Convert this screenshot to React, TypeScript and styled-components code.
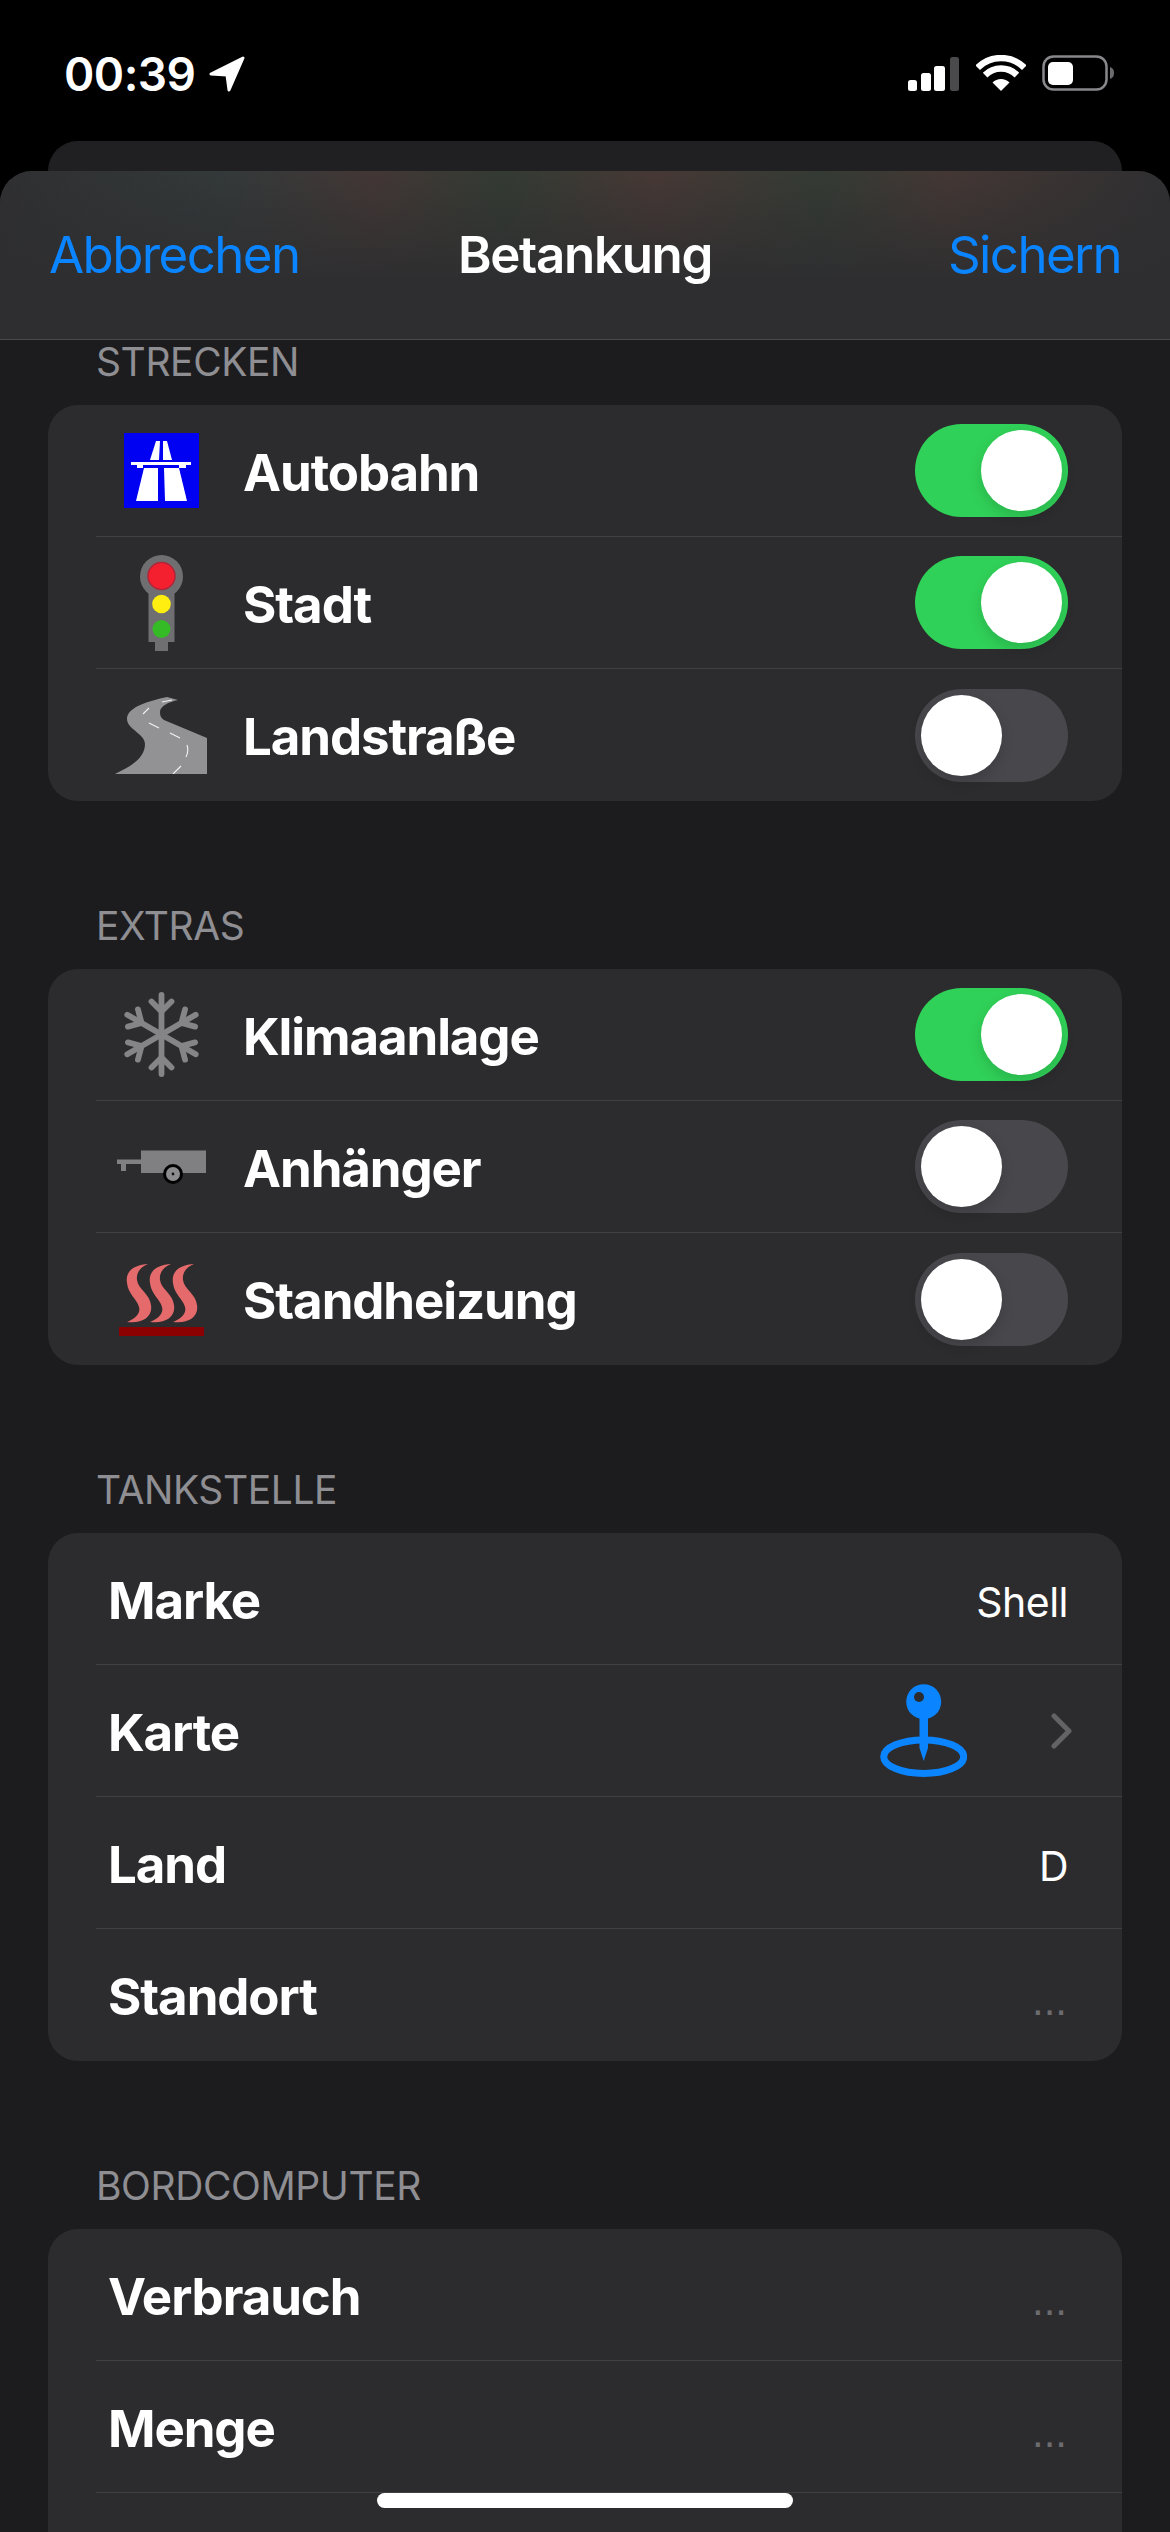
import React from "react";
import styled, { createGlobalStyle } from "styled-components";

const GlobalStyle = createGlobalStyle`
  html, body {
    margin: 0;
    padding: 0;
    background: #000;
  }
  * {
    box-sizing: border-box;
  }
`;

const Page = styled.div`
  position: relative;
  width: 1170px;
  height: 2532px;
  overflow: hidden;
  background: #000;
  font-family: Inter, "Liberation Sans", sans-serif;
  color: #fff;
`;

const StatusBar = styled.div`
  height: 141px;
  display: flex;
  justify-content: space-between;
  align-items: flex-start;
  padding: 55px 55px 0 64px;
`;

const StatusLeft = styled.div`
  display: flex;
  align-items: center;
  gap: 13px;
  height: 38px;
`;

const Clock = styled.span`
  font-size: 46px;
  font-weight: 600;
  line-height: 38px;
  letter-spacing: -0.5px;
`;

const StatusRight = styled.div`
  display: flex;
  align-items: flex-start;
  gap: 16px;
`;

const PeekCard = styled.div`
  height: 30px;
  margin: 0 48px;
  background: #202022;
  border-radius: 30px 30px 0 0;
`;

const Sheet = styled.div`
  height: 2361px;
  background: #1c1c1e;
  border-radius: 32px 32px 0 0;
  overflow: hidden;
`;

const NavBar = styled.div`
  height: 169px;
  display: grid;
  grid-template-columns: 1fr auto 1fr;
  align-items: center;
  padding: 0 49px;
  border-bottom: 1px solid #48484a;
  background:
    linear-gradient(to bottom, rgba(46, 46, 48, 0) 0%, #2e2e30 66%),
    linear-gradient(
      to right,
      #2f2f31 0%,
      #33393a 19%,
      #433735 32%,
      #333b33 43%,
      #473835 56%,
      #343b34 70%,
      #443734 81%,
      #2f2f31 100%
    );
`;

const NavAction = styled.span<{ $end?: boolean }>`
  font-size: 51px;
  line-height: 60px;
  letter-spacing: -1.6px;
  color: #0a84ff;
  text-align: ${(p) => (p.$end ? "right" : "left")};
`;

const NavTitle = styled.span`
  font-size: 51px;
  line-height: 60px;
  font-weight: 600;
  letter-spacing: -1.3px;
`;

const Section = styled.section`
  margin-bottom: 103px;
`;

const SectionLabel = styled.div`
  height: 65px;
  padding: 1px 0 0 96px;
  font-size: 39px;
  line-height: 42px;
  letter-spacing: -0.4px;
  color: #8e8e93;
`;

const Group = styled.div`
  margin: 0 48px;
  background: #2c2c2e;
  border-radius: 30px;
  overflow: hidden;
`;

const Row = styled.div`
  height: 132px;
  margin-left: 48px;
  display: flex;
  align-items: center;
  padding-right: 54px;
  border-bottom: 1px solid #404042;

  &:last-child {
    border-bottom: 0;
  }
`;

const IconSlot = styled.div`
  width: 92px;
  margin: 0 36px 0 19px;
  display: flex;
  align-items: center;
  justify-content: center;
  flex: none;
`;

const RowLabel = styled.span<{ $plain?: boolean }>`
  flex: 1;
  padding: 4px 0 0 ${(p) => (p.$plain ? "12px" : "0")};
  font-size: 51px;
  line-height: 60px;
  font-weight: 700;
  letter-spacing: -1.1px;
`;

const RowValue = styled.span`
  padding-top: 6px;
  font-size: 41px;
  line-height: 50px;
  letter-spacing: -0.5px;
`;

const Placeholder = styled.span`
  padding-top: 12px;
  margin-right: 1px;
  font-family: "Liberation Sans", sans-serif;
  font-size: 42px;
  line-height: 50px;
  color: #6c6c6f;
`;

const MapLink = styled.div`
  display: flex;
  align-items: center;
  gap: 84px;
  margin-right: -4px;
`;

const Track = styled.div<{ $on: boolean }>`
  width: 153px;
  height: 93px;
  flex: none;
  padding: 6px;
  display: flex;
  justify-content: ${(p) => (p.$on ? "flex-end" : "flex-start")};
  border-radius: 47px;
  background: ${(p) => (p.$on ? "#30d158" : "#47474c")};
`;

const Thumb = styled.div`
  width: 81px;
  height: 81px;
  border-radius: 50%;
  background: #fff;
  box-shadow: 0 6px 14px rgba(0, 0, 0, 0.14);
`;

const HomeBar = styled.div`
  position: absolute;
  left: 377px;
  bottom: 24px;
  width: 416px;
  height: 15px;
  border-radius: 8px;
  background: #fff;
`;

const LocationArrow = () => (
  <svg width="36" height="36" viewBox="0 0 36 36">
    <path
      d="M34 2 L2 18 L18 19 L20 34 Z"
      fill="#fff"
      stroke="#fff"
      strokeWidth="3"
      strokeLinejoin="round"
    />
  </svg>
);

const SignalIcon = () => (
  <svg width="52" height="34" viewBox="0 0 52 34" style={{ marginTop: 2 }}>
    <rect x="0" y="23" width="9" height="11" rx="2.5" fill="#fff" />
    <rect x="13" y="16" width="10" height="18" rx="2.5" fill="#fff" />
    <rect x="26" y="9" width="11" height="25" rx="2.5" fill="#fff" />
    <rect x="42" y="0" width="9" height="34" rx="2.5" fill="#4a4a4c" />
  </svg>
);

const WifiIcon = () => (
  <svg width="50" height="36" viewBox="0 0 50 36">
    <g fill="none" stroke="#fff" strokeWidth="6.5">
      <path d="M1.7 12.7 A33 33 0 0 1 48.3 12.7" />
      <path d="M9.1 20.1 A22.5 22.5 0 0 1 40.9 20.1" />
    </g>
    <path d="M25 36 L16.5 27.5 A12 12 0 0 1 33.5 27.5 Z" fill="#fff" />
  </svg>
);

const BatteryIcon = () => (
  <svg width="73" height="36" viewBox="0 0 73 36">
    <rect x="1.5" y="1.5" width="63" height="33" rx="10" fill="none" stroke="#88888c" strokeWidth="2.5" />
    <rect x="6" y="7" width="25" height="23" rx="5" fill="#fff" />
    <path d="M68 12 C71 13 72 15 72 18 C72 21 71 23 68 24 Z" fill="#6c6c70" />
  </svg>
);

const AutobahnIcon = () => (
  <svg width="75" height="75" viewBox="0 0 75 75">
    <rect width="75" height="75" fill="#0000f2" />
    <g fill="#fff">
      <polygon points="32,8 36,8 35,27 26,27" />
      <polygon points="39,8 43,8 48,27 39,27" />
      <rect x="7" y="29" width="60" height="3" />
      <rect x="13" y="32" width="6" height="3" />
      <rect x="55" y="32" width="7" height="3" />
      <polygon points="20,35 34,35 34,68 12,68" />
      <polygon points="40,35 55,35 63,68 41,68" />
    </g>
  </svg>
);

const TrafficLightIcon = () => (
  <svg width="43" height="96" viewBox="0 0 43 96">
    <g fill="#6f6f72">
      <circle cx="21.5" cy="21.5" r="21.5" />
      <rect x="8.5" y="30" width="26" height="57" />
      <rect x="15" y="87" width="13" height="9" />
    </g>
    <circle cx="21.5" cy="21" r="13.5" fill="#f4202f" stroke="#b02538" strokeWidth="1.5" />
    <circle cx="21.5" cy="49" r="9.3" fill="#ffee10" />
    <circle cx="21.5" cy="74" r="9" fill="#35bb25" />
  </svg>
);

const CountryRoadIcon = () => (
  <svg width="92" height="77" viewBox="0 0 92 77">
    <path
      d="M0 77 C14 70 30 62 30 47 C30 37 12 32 12 22 C12 10 34 4 52 0 L63 3 C54 5 45 9 45 15 C45 19 46 21 49 23 L92 41 L92 77 Z"
      fill="#929294"
    />
    <g fill="none" stroke="#f2f2f2" strokeWidth="1.1">
      <path d="M47 5 L57 3" />
      <path d="M28 17 L34 11" />
      <path d="M34 26 L44 31" />
      <path d="M55 36 L65 41" />
      <path d="M72 48 Q74 54 71 60" />
      <path d="M58 77 L66 69" />
    </g>
  </svg>
);

const SnowflakeIcon = () => (
  <svg width="75" height="85" viewBox="-37.5 -42.5 75 85">
    <g fill="none" stroke="#858587" strokeWidth="5.8" strokeLinecap="round" strokeLinejoin="round">
      {[0, 60, 120, 180, 240, 300].map((angle) => (
        <g key={angle} transform={`rotate(${angle})`}>
          <path d="M0 0 L0 -39.5" />
          <path d="M-10 -33 L0 -23 L10 -33" />
        </g>
      ))}
    </g>
  </svg>
);

const TrailerIcon = () => (
  <svg width="89" height="34" viewBox="0 0 89 34">
    <g fill="#808082">
      <rect x="24" y="0.5" width="65" height="22.5" />
      <rect x="0" y="9.5" width="24" height="4.5" />
      <rect x="4" y="14" width="5" height="7" />
    </g>
    <circle cx="56" cy="24" r="8.5" fill="#8c8c8e" stroke="#000" strokeWidth="3" />
    <circle cx="56" cy="24" r="1.4" fill="#111" />
  </svg>
);

const HeaterIcon = () => (
  <svg width="85" height="73" viewBox="0 0 85 73">
    {[0, 23, 46].map((dx) => (
      <path
        key={dx}
        transform={`translate(${dx} 0)`}
        d="M29 1 C15 2 6 8 8 20 C9 31 18 36 20 44 C22 51 15 56 8 59 C23 61 34 54 32 42 C31 31 19 26 18 17 C17 9 22 4 29 1 Z"
        fill="#e56a6b"
      />
    ))}
    <rect x="0" y="64" width="85" height="9" rx="1" fill="#8b0000" />
  </svg>
);

const PinIcon = () => (
  <svg width="87" height="93" viewBox="0 0 87 93">
    <ellipse cx="43.7" cy="72.7" rx="40" ry="16.8" fill="none" stroke="#0a84ff" strokeWidth="7" />
    <path d="M39.5 30 H48 V64 L43.7 77 L39.5 64 Z" fill="#0a84ff" />
    <circle cx="43.7" cy="17.7" r="17.5" fill="#0a84ff" />
    <circle cx="39" cy="13" r="5" fill="#2c2c2e" />
  </svg>
);

const Chevron = () => (
  <svg width="21" height="36" viewBox="0 0 21 36">
    <path
      d="M3 3 L18 18 L3 33"
      fill="none"
      stroke="#636366"
      strokeWidth="5"
      strokeLinecap="round"
      strokeLinejoin="round"
    />
  </svg>
);

const strecken = [
  { label: "Autobahn", icon: <AutobahnIcon />, on: true },
  { label: "Stadt", icon: <TrafficLightIcon />, on: true },
  { label: "Landstraße", icon: <CountryRoadIcon />, on: false },
];

const extras = [
  { label: "Klimaanlage", icon: <SnowflakeIcon />, on: true },
  { label: "Anhänger", icon: <TrailerIcon />, on: false },
  { label: "Standheizung", icon: <HeaterIcon />, on: false },
];

const ToggleRows = ({ rows }: { rows: typeof strecken }) => (
  <Group>
    {rows.map((row) => (
      <Row key={row.label}>
        <IconSlot>{row.icon}</IconSlot>
        <RowLabel>{row.label}</RowLabel>
        <Track $on={row.on}>
          <Thumb />
        </Track>
      </Row>
    ))}
  </Group>
);

export default function App() {
  return (
    <Page>
      <GlobalStyle />
      <StatusBar>
        <StatusLeft>
          <Clock>00:39</Clock>
          <LocationArrow />
        </StatusLeft>
        <StatusRight>
          <SignalIcon />
          <WifiIcon />
          <BatteryIcon />
        </StatusRight>
      </StatusBar>
      <PeekCard />
      <Sheet>
        <NavBar>
          <NavAction>Abbrechen</NavAction>
          <NavTitle>Betankung</NavTitle>
          <NavAction $end>Sichern</NavAction>
        </NavBar>

        <Section>
          <SectionLabel>STRECKEN</SectionLabel>
          <ToggleRows rows={strecken} />
        </Section>

        <Section>
          <SectionLabel>EXTRAS</SectionLabel>
          <ToggleRows rows={extras} />
        </Section>

        <Section>
          <SectionLabel>TANKSTELLE</SectionLabel>
          <Group>
            <Row>
              <RowLabel $plain>Marke</RowLabel>
              <RowValue>Shell</RowValue>
            </Row>
            <Row>
              <RowLabel $plain>Karte</RowLabel>
              <MapLink>
                <PinIcon />
                <Chevron />
              </MapLink>
            </Row>
            <Row>
              <RowLabel $plain>Land</RowLabel>
              <RowValue>D</RowValue>
            </Row>
            <Row>
              <RowLabel $plain>Standort</RowLabel>
              <Placeholder>...</Placeholder>
            </Row>
          </Group>
        </Section>

        <Section>
          <SectionLabel>BORDCOMPUTER</SectionLabel>
          <Group>
            <Row>
              <RowLabel $plain>Verbrauch</RowLabel>
              <Placeholder>...</Placeholder>
            </Row>
            <Row>
              <RowLabel $plain>Menge</RowLabel>
              <Placeholder>...</Placeholder>
            </Row>
            <Row />
          </Group>
        </Section>
      </Sheet>
      <HomeBar />
    </Page>
  );
}
